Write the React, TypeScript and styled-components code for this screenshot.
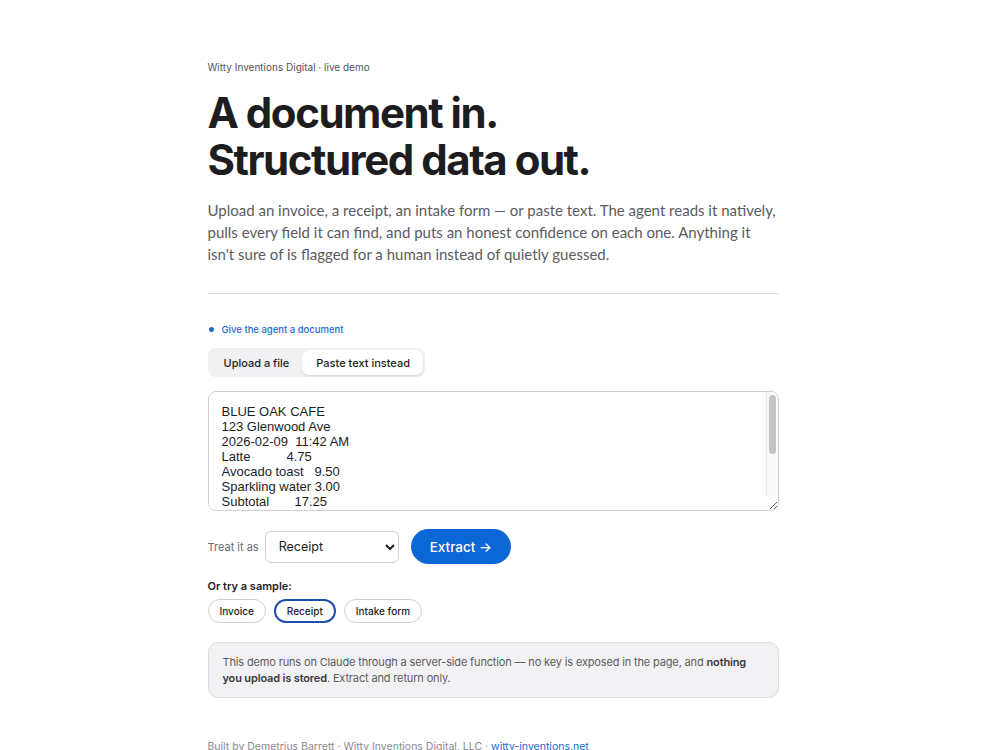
import { useState } from 'react';
import styled, { createGlobalStyle } from 'styled-components';

const GlobalStyle = createGlobalStyle`
  html, body {
    margin: 0;
    padding: 0;
    background: #ffffff;
  }
  body {
    font-family: Inter, "Liberation Sans", Arial, sans-serif;
    color: #1d1d1f;
    -webkit-font-smoothing: antialiased;
  }
  * {
    box-sizing: border-box;
  }
`;

const Page = styled.main`
  width: 571px;
  margin: 0 auto;
  padding: 61px 0 40px;
  transform: translateX(-7px);
`;

const Eyebrow = styled.div`
  font-size: 10px;
  color: #555;
`;

const Title = styled.h1`
  margin: 16px 0 0;
  font-size: 42px;
  line-height: 47px;
  font-weight: 700;
  letter-spacing: -0.035em;
  color: #1d1d1f;
`;

const Lead = styled.p`
  margin: 16px 0 0;
  font-family: Lato, "Liberation Sans", Arial, sans-serif;
  font-size: 15px;
  line-height: 22px;
  color: #5b5b60;
`;

const Rule = styled.hr`
  margin: 28px 0 0;
  border: 0;
  border-top: 1px solid #dcdcdf;
`;

const Step = styled.div`
  margin-top: 30px;
  display: flex;
  align-items: center;
  gap: 8px;
  font-size: 9.5px;
  font-weight: 500;
  color: #1a6bd1;
`;

const Dot = styled.span`
  width: 5px;
  height: 5px;
  border-radius: 50%;
  background: #1a6bd1;
  margin-left: 1px;
`;

const Tabs = styled.div`
  margin-top: 13px;
  display: inline-flex;
  padding: 2px;
  background: #f1f1f3;
  border-radius: 8px;
`;

const Tab = styled.button<{ $active?: boolean }>`
  font-family: inherit;
  border: 0;
  height: 25px;
  padding: 0 13px 0 14px;
  border-radius: 7px;
  font-size: 11px;
  font-weight: 500;
  color: #1d1d1f;
  cursor: pointer;
  background: ${(p) => (p.$active ? '#ffffff' : 'transparent')};
  box-shadow: ${(p) => (p.$active ? '0 1px 2px rgba(0,0,0,0.12)' : 'none')};
`;

const Editor = styled.div`
  position: relative;
  margin-top: 14px;
`;

const TextArea = styled.textarea`
  display: block;
  width: 100%;
  height: 120px;
  padding: 12px 13px 10px;
  border: 1px solid #cfcfd3;
  border-radius: 8px;
  font-family: "Liberation Sans", Arial, sans-serif;
  font-size: 13px;
  line-height: 15px;
  color: #1d1d1f;
  resize: vertical;
  overflow-y: scroll;
  outline: none;
`;

/* classic scrollbar track + thumb drawn over the textarea's right edge */
const ScrollTrack = styled.div`
  position: absolute;
  top: 1px;
  right: 1px;
  bottom: 15px;
  width: 12px;
  background: #fafafa;
  border-left: 1px solid #ececec;
  border-top-right-radius: 7px;
  pointer-events: none;
`;

const ScrollThumb = styled.div`
  margin: 3px 0 0 2px;
  width: 7px;
  height: 59px;
  border-radius: 4px;
  background: #c4c4c4;
`;

const Controls = styled.div`
  margin-top: 18px;
  display: flex;
  align-items: center;
`;

const Label = styled.span`
  font-size: 11px;
  color: #6b6b70;
  margin-right: 6px;
`;

const Select = styled.select`
  width: 134px;
  height: 32px;
  padding: 0 8px 0 9px;
  border: 1px solid #cfcfd3;
  border-radius: 6px;
  background: #fff;
  font-family: inherit;
  font-size: 12.5px;
  color: #1d1d1f;
`;

const ExtractButton = styled.button`
  margin-left: 12px;
  height: 35px;
  padding: 0 19px;
  border: 0;
  border-radius: 18px;
  background: #0b66d6;
  color: #fff;
  font-family: inherit;
  font-size: 13.5px;
  font-weight: 500;
  cursor: pointer;
`;

const SampleTitle = styled.div`
  margin-top: 15px;
  font-size: 11px;
  font-weight: 600;
  color: #1d1d1f;
`;

const Chips = styled.div`
  margin-top: 6px;
  display: flex;
  gap: 8px;
`;

const Chip = styled.button<{ $selected?: boolean }>`
  height: 24px;
  padding: 0 11px;
  border-radius: 12px;
  font-family: inherit;
  font-size: 10px;
  font-weight: 500;
  color: #1d1d1f;
  background: #fff;
  cursor: pointer;
  border: ${(p) => (p.$selected ? '2px solid #1d4fae' : '1px solid #cfcfd3')};
`;

const Notice = styled.div`
  margin-top: 19px;
  padding: 11px 14px;
  background: #f2f2f4;
  border: 1px solid #dcdcdf;
  border-radius: 10px;
  font-size: 11px;
  line-height: 16px;
  letter-spacing: -0.15px;
  color: #5b5b60;

  strong {
    color: #3a3a3e;
    font-weight: 600;
  }
`;

const Footer = styled.footer`
  margin-top: 42px;
  font-size: 10.5px;
  color: #8a8a8f;

  a {
    color: #1a6bd1;
    text-decoration: none;
  }
`;

const receipt = `BLUE OAK CAFE
123 Glenwood Ave
2026-02-09  11:42 AM
Latte          4.75
Avocado toast   9.50
Sparkling water 3.00
Subtotal       17.25
Tax             1.42
Total          18.67`;

const samples = ['Invoice', 'Receipt', 'Intake form'];

export default function App() {
  const [mode, setMode] = useState<'upload' | 'paste'>('paste');
  const [sample, setSample] = useState('Receipt');
  const [text, setText] = useState(receipt);

  return (
    <>
      <GlobalStyle />
      <Page>
        <Eyebrow>Witty Inventions Digital · live demo</Eyebrow>
        <Title>
          A document in.
          <br />
          Structured data out.
        </Title>
        <Lead>
          Upload an invoice, a receipt, an intake form — or paste text. The agent reads it natively,
          pulls every field it can find, and puts an honest confidence on each one. Anything it
          isn't sure of is flagged for a human instead of quietly guessed.
        </Lead>
        <Rule />

        <Step>
          <Dot />
          Give the agent a document
        </Step>

        <Tabs>
          <Tab $active={mode === 'upload'} onClick={() => setMode('upload')}>
            Upload a file
          </Tab>
          <Tab $active={mode === 'paste'} onClick={() => setMode('paste')}>
            Paste text instead
          </Tab>
        </Tabs>

        <Editor>
          <TextArea value={text} onChange={(e) => setText(e.target.value)} spellCheck={false} />
          <ScrollTrack>
            <ScrollThumb />
          </ScrollTrack>
        </Editor>

        <Controls>
          <Label>Treat it as</Label>
          <Select defaultValue="receipt">
            <option value="invoice">Invoice</option>
            <option value="receipt">Receipt</option>
            <option value="intake">Intake form</option>
          </Select>
          <ExtractButton>Extract →</ExtractButton>
        </Controls>

        <SampleTitle>Or try a sample:</SampleTitle>
        <Chips>
          {samples.map((s) => (
            <Chip key={s} $selected={s === sample} onClick={() => setSample(s)}>
              {s}
            </Chip>
          ))}
        </Chips>

        <Notice>
          This demo runs on Claude through a server-side function — no key is exposed in the page, and{' '}
          <strong>nothing you upload is stored</strong>. Extract and return only.
        </Notice>

        <Footer>
          Built by Demetrius Barrett · Witty Inventions Digital, LLC ·{' '}
          <a href="#">witty-inventions.net</a>
        </Footer>
      </Page>
    </>
  );
}
